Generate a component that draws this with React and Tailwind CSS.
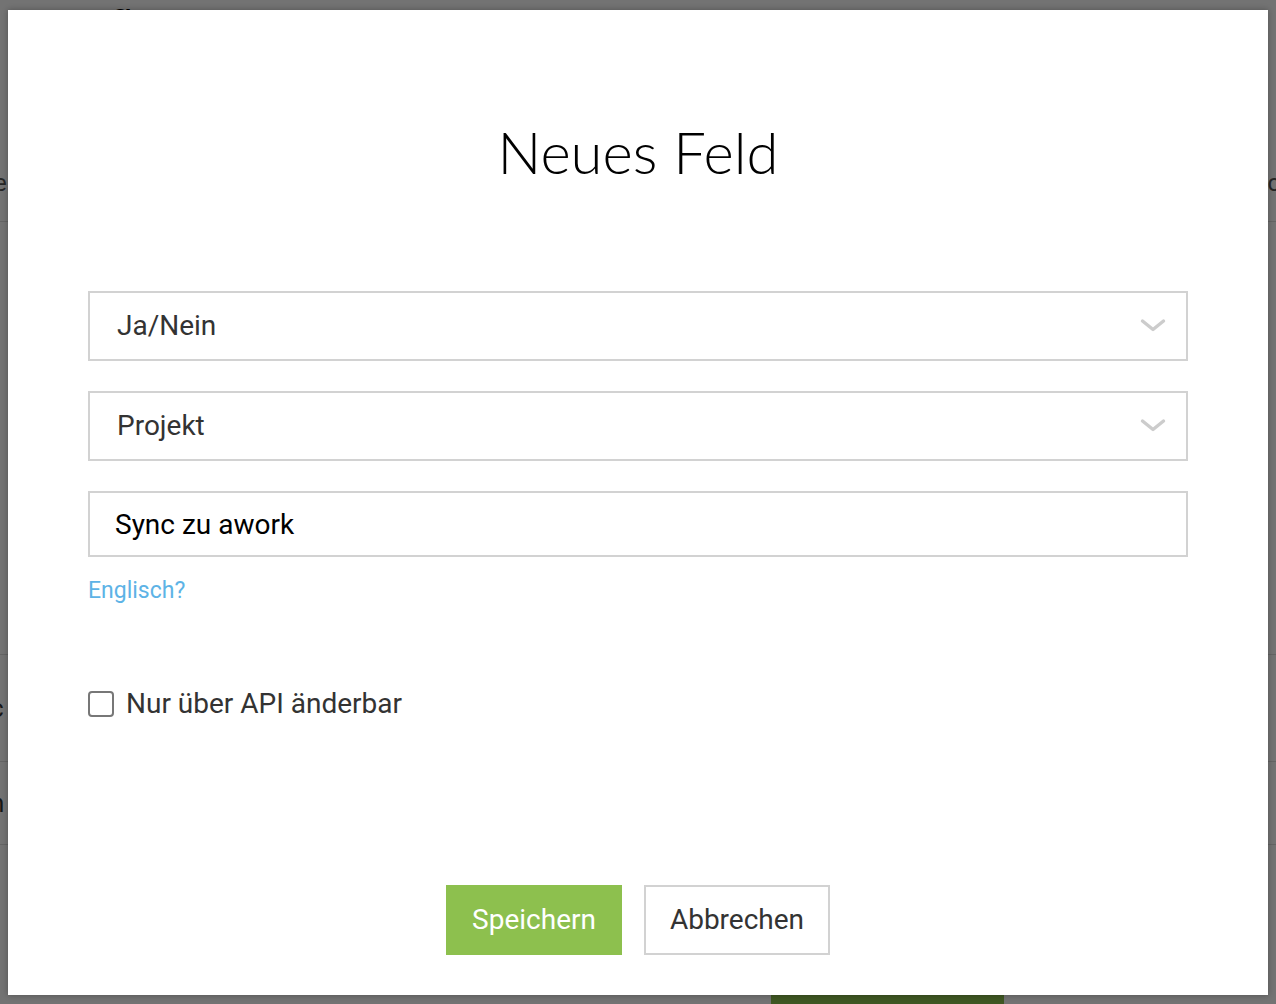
import { useState } from "react";

function Chevron() {
  return (
    <svg width="26" height="16" viewBox="0 0 26 16" fill="none" className="shrink-0">
      <path d="M2.5 3 L13 11.5 L23.5 3" stroke="#cccccc" strokeWidth="3.4" strokeLinecap="round" strokeLinejoin="round" />
    </svg>
  );
}

function SelectBox({ value }) {
  return (
    <div className="flex h-[70px] w-full items-center justify-between border-2 border-[#d2d2d2] bg-white pl-[27px] pr-[20px] text-[28px] text-[#333]">
      <span>{value}</span>
      <Chevron />
    </div>
  );
}

export default function App() {
  const [apiOnly, setApiOnly] = useState(false);
  const [name, setName] = useState("Sync zu awork");

  return (
    <div className="relative h-[1004px] w-[1276px] overflow-hidden bg-white" style={{ fontFamily: "Roboto, 'Liberation Sans', sans-serif" }}>
      {/* page behind the dialog */}
      <div className="flex h-[38px] items-end px-[110px] text-[40px] leading-none text-black">g</div>
      <div className="flex h-[184px] items-end border-b border-[#ddd] pb-[20px] text-[24px] text-[#555]">
        <span className="-ml-[6px]">e</span>
        <span className="ml-auto -mr-[4px]">c</span>
      </div>
      <div className="h-[433px] border-b border-[#ddd]"></div>
      <div className="flex h-[107px] items-center border-b border-[#ddd] text-[26px] text-[#333]">
        <span className="-ml-[10px]">c</span>
      </div>
      <div className="flex h-[83px] items-center border-b border-[#ddd] text-[26px] text-[#333]">
        <span className="-ml-[10px]">n</span>
      </div>
      <div className="flex h-[159px] items-end pl-[771px]">
        <div className="h-[60px] w-[233px] bg-[#8dc04e]"></div>
      </div>

      {/* overlay + dialog */}
      <div className="absolute inset-0 bg-black/55 pl-[8px] pt-[10px]">
        <div className="flex h-[985px] w-[1260px] flex-col bg-white px-[80px] shadow-[0_0_6px_rgba(0,0,0,0.3)]">
          <h1
            className="mt-[108px] text-center text-[58px] font-light leading-[68px] text-black"
            style={{ fontFamily: "Lato, 'Open Sans', sans-serif" }}
          >
            Neues Feld
          </h1>

          <div className="mt-[105px]">
            <SelectBox value="Ja/Nein" />
          </div>
          <div className="mt-[30px]">
            <SelectBox value="Projekt" />
          </div>
          <input
            value={name}
            onChange={(e) => setName(e.target.value)}
            className="mt-[30px] h-[66px] w-full border-2 border-[#d2d2d2] bg-white pl-[25px] text-[28px] text-black outline-none"
          />
          <a href="#" className="mt-[18px] self-start text-[23px] leading-[32px] text-[#5db3e6]">
            Englisch?
          </a>

          <label className="mt-[76px] flex cursor-pointer items-center gap-[12px] self-start text-[28px] text-[#333]">
            <input
              type="checkbox"
              checked={apiOnly}
              onChange={(e) => setApiOnly(e.target.checked)}
              className="h-[26px] w-[26px] appearance-none rounded-[4px] border-2 border-[#777] bg-white checked:bg-[#8dc04e]"
            />
            <span>Nur über API änderbar</span>
          </label>

          <div className="mt-[160px] flex justify-center gap-[22px]">
            <button className="h-[70px] w-[176px] bg-[#8dc04e] text-[28px] text-white">Speichern</button>
            <button className="h-[70px] w-[186px] border-2 border-[#d2d2d2] bg-white text-[28px] text-[#333]">Abbrechen</button>
          </div>
        </div>
      </div>
    </div>
  );
}
